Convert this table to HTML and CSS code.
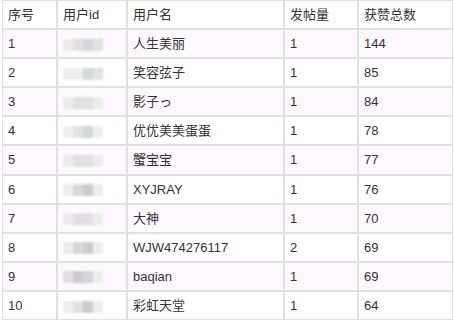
FILE: index.html
```html
<!DOCTYPE html>
<html lang="zh">
<head>
<meta charset="utf-8">
<link rel="stylesheet" href="styles.css">
</head>
<body>
<table class="rank">
  <colgroup>
    <col class="c-no"><col class="c-id"><col class="c-name"><col class="c-posts"><col class="c-likes">
  </colgroup>
  <thead>
    <tr><th>序号</th><th>用户id</th><th>用户名</th><th>发帖量</th><th>获赞总数</th></tr>
  </thead>
  <tbody>
    <tr><td>1</td><td><span class="mosaic"><i class="g1"></i><i class="g2"></i><i class="g3"></i><i class="g2"></i></span></td><td>人生美丽</td><td>1</td><td>144</td></tr>
    <tr><td>2</td><td><span class="mosaic"><i class="g1"></i><i class="g1"></i><i class="g3"></i><i class="g2"></i></span></td><td>笑容弦子</td><td>1</td><td>85</td></tr>
    <tr><td>3</td><td><span class="mosaic"><i class="g1"></i><i class="g2"></i><i class="g2"></i><i class="g1"></i></span></td><td>影子っ</td><td>1</td><td>84</td></tr>
    <tr><td>4</td><td><span class="mosaic"><i class="g1"></i><i class="g2"></i><i class="g3"></i><i class="g1"></i></span></td><td>优优美美蛋蛋</td><td>1</td><td>78</td></tr>
    <tr><td>5</td><td><span class="mosaic"><i class="g1"></i><i class="g2"></i><i class="g2"></i><i class="g1"></i></span></td><td>蟹宝宝</td><td>1</td><td>77</td></tr>
    <tr><td>6</td><td><span class="mosaic"><i class="g1"></i><i class="g3"></i><i class="g4"></i><i class="g1"></i></span></td><td>XYJRAY</td><td>1</td><td>76</td></tr>
    <tr><td>7</td><td><span class="mosaic"><i class="g1"></i><i class="g2"></i><i class="g2"></i><i class="g1"></i></span></td><td>大神</td><td>1</td><td>70</td></tr>
    <tr><td>8</td><td><span class="mosaic"><i class="g1"></i><i class="g3"></i><i class="g4"></i><i class="g1"></i></span></td><td>WJW474276117</td><td>2</td><td>69</td></tr>
    <tr><td>9</td><td><span class="mosaic"><i class="g2"></i><i class="g4"></i><i class="g3"></i><i class="g1"></i></span></td><td>baqian</td><td>1</td><td>69</td></tr>
    <tr><td>10</td><td><span class="mosaic"><i class="g1"></i><i class="g2"></i><i class="g4"></i><i class="g1"></i></span></td><td>彩虹天堂</td><td>1</td><td>64</td></tr>
  </tbody>
</table>
</body>
</html>
```
FILE: styles.css
```css
html, body {
  margin: 0;
  padding: 0;
  background: #fff;
}
body {
  padding-left: 2px;
  font-family: "Liberation Sans", "Noto Sans CJK SC", sans-serif;
  font-size: 13px;
  color: #333;
}
.rank {
  width: 451px;
  table-layout: fixed;
  border-collapse: separate;
  border-spacing: 0;
}
.c-no { width: 55px; }
.c-id { width: 70px; }
.c-name { width: 157px; }
.c-posts { width: 74px; }
.c-likes { width: 95px; }
.rank th, .rank td {
  border: 1px solid #e0e0e0;
  padding: 4px 5px;
  line-height: 19.1px;
  text-align: left;
  font-weight: normal;
  white-space: nowrap;
  overflow: hidden;
}
.rank tbody tr:nth-child(odd) td {
  background: #fdf8fd;
}
.mosaic {
  display: inline-flex;
  vertical-align: middle;
  filter: blur(1px);
  opacity: 0.85;
}
.mosaic i {
  display: block;
  width: 10px;
  height: 12px;
}
.g1 { background: #ebebeb; }
.g2 { background: #dcdcdc; }
.g3 { background: #cfd1d5; }
.g4 { background: #c4c4c4; }
```
